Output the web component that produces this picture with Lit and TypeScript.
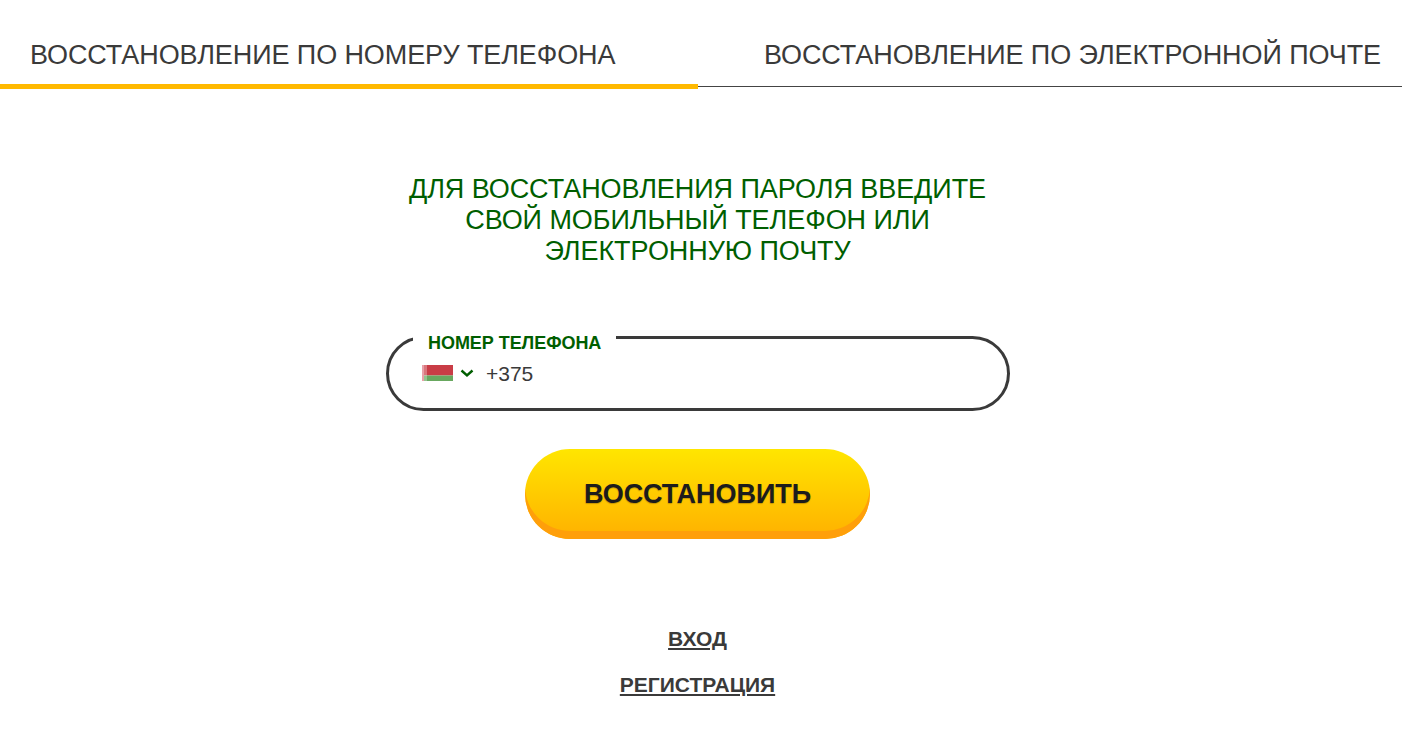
import { LitElement, html, css } from "lit";
import { customElement } from "lit/decorators.js";

@customElement("app-root")
export class AppRoot extends LitElement {
  static styles = css`
    :host { display: block; width: 1402px; height: 738px; background: #fff; font-family: "Liberation Sans", Arial, sans-serif; color: #3a3a3a; overflow: hidden; }
    .tabs { display: grid; grid-template-columns: 698px 704px; height: 89px; }
    .tab { box-sizing: border-box; height: 89px; font-size: 27px; line-height: 31px; padding-top: 40px; white-space: nowrap; letter-spacing: -0.09px; }
    .tab.active { padding-left: 30px; border-bottom: 5px solid #ffb900; }
    .tab.other { padding-left: 66px; height: 87px; border-bottom: 1px solid #444; }
    .main { display: flex; flex-direction: column; align-items: center; width: 1395px; }
    h1 { margin: 85px 0 0; font-weight: 400; font-size: 27px; line-height: 31px; color: #005e00; text-align: center; width: 640px; letter-spacing: -0.06px; }
    .field { position: relative; box-sizing: border-box; margin: 69px 0 0 1px; width: 624px; height: 75px; border: 3px solid #3a3a3a; border-radius: 38px; display: flex; align-items: center; padding: 0 0 0 33px; }
    .label { position: absolute; left: 24px; top: -6px; padding: 0 15px; background: #fff; font-size: 18px; line-height: 20px; font-weight: 700; color: #005e00; white-space: nowrap; letter-spacing: -0.05px; }
    .phone { display: flex; align-items: center; margin-top: 1px; }
    .flag { display: block; width: 31px; height: 16px; margin-top: -2px; }
    .chev { display: block; width: 14px; height: 9px; margin: -2px 0 0 7px; }
    .code { margin-left: 12px; font-size: 21px; line-height: 24px; color: #3a3a3a; }
    .btn { box-sizing: border-box; margin-top: 38px; width: 345px; height: 90px; border: 0; border-radius: 45px; background: linear-gradient(#ffe600, #ffb000); box-shadow: inset 0 -8px 0 #ff9f0a; font: 700 27px/31px "Liberation Sans", Arial, sans-serif; letter-spacing: -0.05px; color: #1c1c1c; text-shadow: 0 1px 1px rgba(120,80,0,.4); padding: 0; }
    .links { margin-top: 88px; display: flex; flex-direction: column; align-items: center; gap: 22px; }
    a { font-size: 21px; line-height: 24px; font-weight: 700; color: #3a3a3a; text-decoration: underline; }
  `;

  render() {
    return html`
      <div class="tabs">
        <div class="tab active">ВОССТАНОВЛЕНИЕ ПО НОМЕРУ ТЕЛЕФОНА</div>
        <div class="tab other">ВОССТАНОВЛЕНИЕ ПО ЭЛЕКТРОННОЙ ПОЧТЕ</div>
      </div>
      <div class="main">
        <h1>ДЛЯ ВОССТАНОВЛЕНИЯ ПАРОЛЯ ВВЕДИТЕ<br />СВОЙ МОБИЛЬНЫЙ ТЕЛЕФОН ИЛИ<br />ЭЛЕКТРОННУЮ ПОЧТУ</h1>
        <div class="field">
          <span class="label">НОМЕР ТЕЛЕФОНА</span>
          <div class="phone">
            <svg class="flag" viewBox="0 0 31 16" aria-hidden="true">
              <rect width="31" height="10.5" fill="#c93c46" />
              <rect y="10.5" width="31" height="5.5" fill="#68a85f" />
              <rect width="5" height="16" fill="#fff" opacity=".3" />
              <rect width="2" height="16" fill="#e8a0a8" />
            </svg>
            <svg class="chev" viewBox="0 0 14 9" aria-hidden="true">
              <path d="M1.5 1.5 L7 6.5 L12.5 1.5" fill="none" stroke="#005e00" stroke-width="2.4" />
            </svg>
            <span class="code">+375</span>
          </div>
        </div>
        <button class="btn">ВОССТАНОВИТЬ</button>
        <div class="links">
          <a href="#">ВХОД</a>
          <a href="#">РЕГИСТРАЦИЯ</a>
        </div>
      </div>
    `;
  }
}
